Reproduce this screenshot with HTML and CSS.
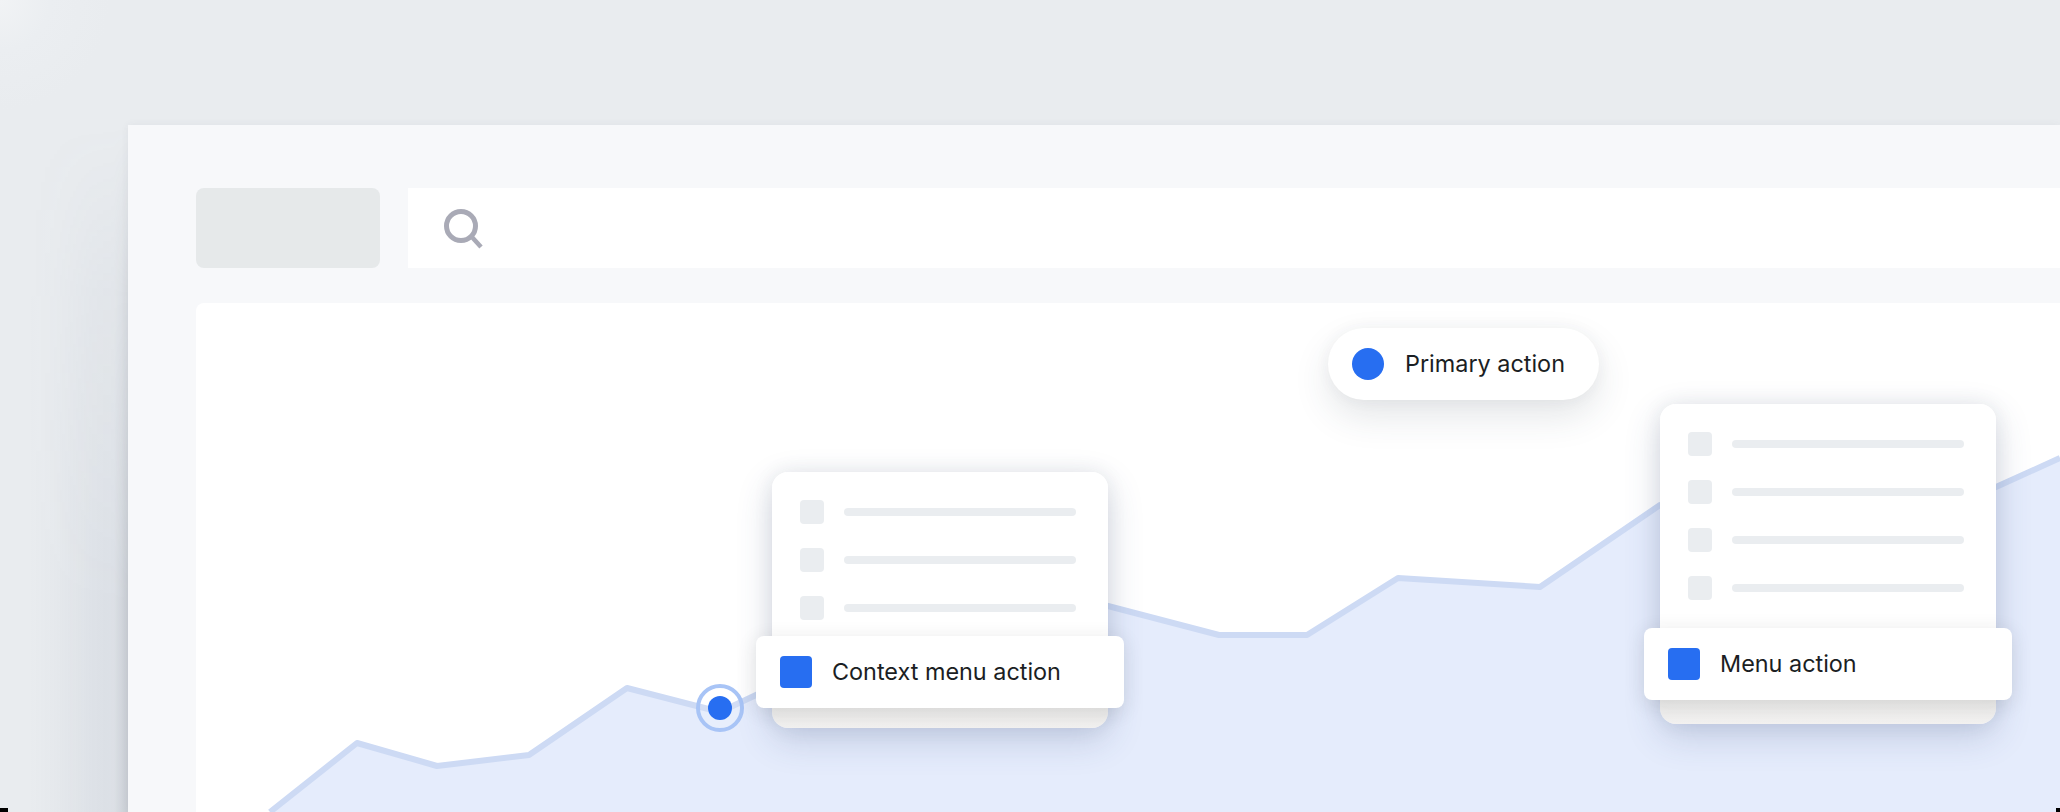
FILE: index.html
```html
<!DOCTYPE html>
<html lang="en">

<head>
    <meta charset="UTF-8">
    <title>Menu actions</title>
    <link rel="stylesheet" href="styles.css">
</head>

<body>
    <div class="stage">
        <div class="panel">
            <div class="header">
                <div class="logo"></div>
                <div class="search">
                    <svg class="search-icon" width="40" height="40" viewBox="0 0 40 40" fill="none" stroke="#a9aab6">
                        <circle cx="17" cy="17" r="14.5" stroke-width="5" />
                        <path d="M27 27 L37 38" stroke-width="4.5" />
                    </svg>
                </div>
            </div>
            <div class="main">
                <svg class="chart" viewBox="196 303 1864 509" width="1864" height="509">
                    <path class="area" d="M270 812 L357 743 L437 766 L529 755 L627 688 L720 712 L756 695 L1000 577 L1108 606 L1219 635 L1307 635 L1398 578 L1540 587 L1660 505 L1996 487 L2060 458 L2060 812 Z" />
                    <path class="trend" d="M270 812 L357 743 L437 766 L529 755 L627 688 L720 712 L756 695 L1000 577 L1108 606 L1219 635 L1307 635 L1398 578 L1540 587 L1660 505 L1996 487 L2060 458" />
                    <circle class="ring" cx="720" cy="708" r="22" />
                    <circle class="dot" cx="720" cy="708" r="12" />
                </svg>

                <div class="pill">
                    <span class="pill-dot"></span>
                    <span class="label">Primary action</span>
                </div>

                <div class="menu menu-context">
                    <div class="row"><span class="check"></span><span class="line"></span></div>
                    <div class="row"><span class="check"></span><span class="line"></span></div>
                    <div class="row"><span class="check"></span><span class="line"></span></div>
                    <div class="action">
                        <span class="square"></span>
                        <span class="label">Context menu action</span>
                    </div>
                </div>

                <div class="menu menu-main">
                    <div class="row"><span class="check"></span><span class="line"></span></div>
                    <div class="row"><span class="check"></span><span class="line"></span></div>
                    <div class="row"><span class="check"></span><span class="line"></span></div>
                    <div class="row"><span class="check"></span><span class="line"></span></div>
                    <div class="action">
                        <span class="square"></span>
                        <span class="label">Menu action</span>
                    </div>
                </div>
            </div>
        </div>
        <span class="corner corner-left"></span>
        <span class="corner corner-right"></span>
    </div>
</body>

</html>
```

FILE: styles.css
```css
html, body {
    margin: 0;
    padding: 0;
}

.stage {
    position: relative;
    width: 2060px;
    height: 812px;
    box-sizing: border-box;
    padding: 125px 0 0 128px;
    overflow: hidden;
    background: radial-gradient(circle at 0 0, #f1f3f5, #ebeef1 50px, #e9ecef 110px);
}

.panel {
    position: relative;
    display: flex;
    flex-direction: column;
    height: 100%;
    box-sizing: border-box;
    padding: 63px 0 0 68px;
    background: #f7f8fa;
    box-shadow: 0 0 8px rgba(60, 70, 90, 0.06);
}

/* soft shadow on the left, gets stronger towards the bottom */
.panel::before {
    content: "";
    position: absolute;
    left: -100px;
    top: 0;
    bottom: 0;
    width: 100px;
    background: linear-gradient(to left, rgba(70, 80, 100, 0.2), rgba(90, 105, 140, 0.09) 14%, rgba(90, 105, 140, 0.08) 35%, rgba(90, 105, 140, 0.02) 75%, transparent);
    -webkit-mask-image: linear-gradient(to bottom, transparent, rgba(0, 0, 0, 0.5) 25%, #000 70%);
    mask-image: linear-gradient(to bottom, transparent, rgba(0, 0, 0, 0.5) 25%, #000 70%);
}

.header {
    display: flex;
    gap: 28px;
    height: 80px;
}

.logo {
    width: 184px;
    border-radius: 8px;
    background: #e6e9ea;
}

.search {
    flex: 1;
    display: flex;
    align-items: center;
    padding-left: 36px;
    background: #fff;
}

.search-icon {
    display: block;
    margin-top: 2px;
}

.main {
    position: relative;
    flex: 1;
    margin-top: 35px;
    border-radius: 8px 0 0 0;
    background: #fff;
}

.chart {
    position: absolute;
    left: 0;
    top: 0;
    display: block;
}

.area {
    fill: #e5ecfc;
}

.trend {
    fill: none;
    stroke: #cddaf4;
    stroke-width: 6;
    stroke-linejoin: round;
}

.ring {
    fill: rgba(255, 255, 255, 0.1);
    stroke: #a8c4f6;
    stroke-width: 4;
}

.dot {
    fill: #276ef1;
}

.label {
    margin-top: -1px;
    font-family: Inter, "Liberation Sans", sans-serif;
    font-size: 23.4px;
    color: #1b1e23;
    white-space: nowrap;
}

.pill {
    position: absolute;
    left: 1132px;
    top: 25px;
    display: flex;
    align-items: center;
    gap: 21px;
    width: 271px;
    height: 72px;
    box-sizing: border-box;
    padding-left: 24px;
    border-radius: 36px;
    background: #fff;
    box-shadow: 0 16px 36px rgba(50, 60, 80, 0.13), 0 0 16px rgba(50, 60, 80, 0.05);
}

.pill-dot {
    width: 32px;
    height: 32px;
    border-radius: 50%;
    background: #276ef1;
}

.menu {
    position: absolute;
    display: flex;
    flex-direction: column;
    gap: 24px;
    width: 336px;
    box-sizing: border-box;
    padding: 28px 32px 0 28px;
    border-radius: 16px;
    background: linear-gradient(to bottom, #fff calc(100% - 30px), #e9e9e8 calc(100% - 30px), #f2f1f0 100%);
    box-shadow: 0 12px 36px rgba(50, 70, 120, 0.2), 0 0 20px rgba(40, 45, 60, 0.08);
}

.menu-context {
    left: 576px;
    top: 169px;
    height: 256px;
}

.menu-main {
    left: 1464px;
    top: 101px;
    height: 320px;
}

.row {
    display: flex;
    align-items: center;
    gap: 20px;
    height: 24px;
}

.check {
    width: 24px;
    height: 24px;
    border-radius: 4px;
    background: #eaedf0;
}

.line {
    flex: 1;
    height: 8px;
    border-radius: 4px;
    background: #eaedf0;
}

.action {
    position: absolute;
    left: -16px;
    right: -16px;
    bottom: 20px;
    display: flex;
    align-items: center;
    gap: 20px;
    height: 72px;
    box-sizing: border-box;
    padding-left: 24px;
    border-radius: 8px;
    background: #fff;
    box-shadow: 0 4px 20px rgba(40, 40, 40, 0.12);
}

.menu-main .action {
    bottom: 24px;
}

.square {
    width: 32px;
    height: 32px;
    border-radius: 4px;
    background: #276ef1;
}

.corner {
    position: absolute;
    bottom: 0;
    height: 4px;
    background: #000;
}

.corner-left {
    left: 0;
    width: 8px;
}

.corner-right {
    right: 0;
    width: 4px;
}
```
